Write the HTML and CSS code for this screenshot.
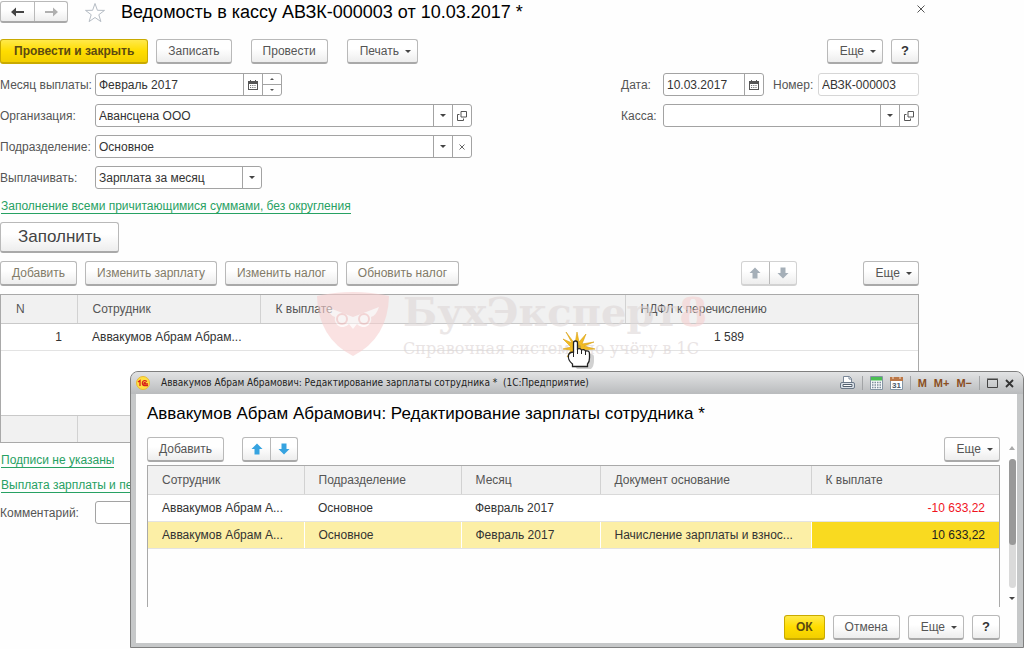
FILE: index.html
```html
<!DOCTYPE html>
<html lang="ru">
<head>
<meta charset="utf-8">
<title>Ведомость в кассу АВЗК-000003</title>
<link rel="stylesheet" href="styles.css">
</head>
<body>
<svg class="defs" aria-hidden="true">
  <symbol id="calendar" viewBox="0 0 10 10"><path d="M0 1h2V0h1v1h4V0h1v1h2v9H0zM1 4v5h8V4z" fill="#555" fill-rule="evenodd"/><path d="M2 5.500h6M2 7.500h6" stroke="#777" stroke-dasharray="1.200 1"/></symbol>
  <symbol id="open" viewBox="0 0 10 10"><path d="M4 .5h5.500v5.500H4zM2.500 3.500h-2v6h6V7.500" fill="none" stroke="#555"/></symbol>
  <symbol id="up" viewBox="0 0 12 12"><path d="M6 .5 11.500 6H8.500v5.500h-5V6H.5z"/></symbol>
  <symbol id="down" viewBox="0 0 12 12"><path d="M6 11.500 11.500 6H8.500V.5h-5V6H.5z"/></symbol>
</svg>

<main class="document">
  <header class="doc-head">
    <div class="pair nav">
      <button aria-label="Назад"><svg width="13" height="10" viewBox="0 0 13 10"><path d="M0 5 5 .5V4h8v2H5v3.500z" fill="#444"/></svg></button>
      <button aria-label="Вперед"><svg width="13" height="10" viewBox="0 0 13 10"><path d="M13 5 8 .5V4H0v2h8v3.500z" fill="#b0b0b0"/></svg></button>
    </div>
    <button class="plain star" aria-label="Избранное"><svg width="22" height="21" viewBox="0 0 22 21"><path d="m11 1.500 2.400 6.800 7.100.1-5.700 4.300 2.100 6.900-5.900-4.100-5.900 4.100 2.100-6.900L1.500 8.400l7.100-.1z" fill="#fff" stroke="#b5bcc4"/></svg></button>
    <h1>Ведомость в кассу АВЗК-000003 от 10.03.2017 *</h1>
    <button class="plain close" aria-label="Закрыть"><svg width="8" height="8" viewBox="0 0 8 8"><path d="m.5.5 7 7m0-7-7 7" stroke="#555"/></svg></button>
  </header>

  <div class="bar commands">
    <button class="btn primary">Провести и закрыть</button>
    <button class="btn">Записать</button>
    <button class="btn apart">Провести</button>
    <button class="btn apart menu">Печать</button>
    <span class="grow"></span>
    <button class="btn menu">Еще</button>
    <button class="btn help">?</button>
  </div>

  <div class="form">
    <div class="form-col">
      <div class="row"><label for="month">Месяц выплаты:</label>
        <div class="field month"><input id="month" value="Февраль 2017"><button aria-label="Календарь"><svg width="10" height="10"><use href="#calendar"/></svg></button><span class="spin"><button aria-label="Больше"><i class="tri-up"></i></button><button aria-label="Меньше"><i class="tri"></i></button></span></div></div>
      <div class="row"><label for="org">Организация:</label>
        <div class="field wide"><select id="org"><option>Авансцена ООО</option></select><span class="cell"><i class="caret"></i></span><button aria-label="Открыть"><svg width="10" height="10"><use href="#open"/></svg></button></div></div>
      <div class="row"><label for="dept">Подразделение:</label>
        <div class="field wide"><select id="dept"><option>Основное</option></select><span class="cell"><i class="caret"></i></span><button aria-label="Очистить"><svg width="6" height="6" viewBox="0 0 6 6"><path d="m.5.5 5 5m0-5-5 5" stroke="#666"/></svg></button></div></div>
      <div class="row"><label for="pay">Выплачивать:</label>
        <div class="field pay"><select id="pay"><option>Зарплата за месяц</option></select><span class="cell"><i class="caret"></i></span></div></div>
    </div>
    <div class="form-col side">
      <div class="row"><label for="date">Дата:</label>
        <div class="field date"><input id="date" value="10.03.2017"><button aria-label="Календарь"><svg width="10" height="10"><use href="#calendar"/></svg></button></div>
        <label class="num-label" for="num">Номер:</label><div class="field number"><input id="num" value="АВЗК-000003"></div></div>
      <div class="row"><label for="cash">Касса:</label>
        <div class="field number-wide"><select id="cash"><option></option></select><span class="cell"><i class="caret"></i></span><button aria-label="Открыть"><svg width="10" height="10"><use href="#open"/></svg></button></div></div>
    </div>
  </div>

  <a class="link" href="#">Заполнение всеми причитающимися суммами, без округления</a>
  <button class="btn fill">Заполнить</button>

  <div class="bar tools">
    <button class="btn muted">Добавить</button>
    <button class="btn muted">Изменить зарплату</button>
    <button class="btn muted">Изменить налог</button>
    <button class="btn muted">Обновить налог</button>
    <span class="grow"></span>
    <div class="pair off"><button aria-label="Вверх"><svg width="12" height="12"><use href="#up"/></svg></button><button aria-label="Вниз"><svg width="12" height="12"><use href="#down"/></svg></button></div>
    <button class="btn menu">Еще</button>
  </div>

  <div class="grid-box">
    <table class="grid staff">
      <colgroup><col class="c-n"><col class="c-name"><col class="c-pay"><col></colgroup>
      <thead><tr><th>N</th><th>Сотрудник</th><th>К выплате</th><th>НДФЛ к перечислению</th></tr></thead>
      <tbody><tr><td class="right">1</td><td>Аввакумов Абрам Абрам...</td><td></td><td class="tax">1 589</td></tr>
      <tr class="blank"><td colspan="4"></td></tr></tbody>
      <tfoot><tr><td></td><td></td><td></td><td></td></tr></tfoot>
    </table>
    <div class="watermark" aria-hidden="true">
      <svg width="72" height="64" viewBox="0 0 72 64"><path d="M0 4Q36-4 72 4 71 46 36 64 1 46 0 4z" fill="#f7cfcf"/><path d="m10 15 26 10 26-10q-3 9-8 10a8 8 0 0 1-14 7l-4 5-4-5a8 8 0 0 1-14-7q-5-1-8-10z" fill="#fff" opacity=".8"/><g fill="none" stroke="#f3c2c2" stroke-width="2"><circle cx="25" cy="27" r="5"/><circle cx="47" cy="27" r="5"/></g></svg>
      <div><div class="brand">БухЭксперт<b>8</b></div><div class="slogan">Справочная система по учёту в 1С</div></div>
    </div>
    <svg class="pointer" width="40" height="44" viewBox="0 0 40 44" aria-hidden="true">
      <path d="m13 13 2-12 2 10 7-8-4 10 12-2-10 4 11 3-13 1-1 3H10l-5 4 4-7-8-1 8-2L1 8l9 4L4 1z" fill="#f2bb22" stroke="#d9a010" stroke-width=".6"/>
      <path d="M11 35q-5-5-4-11l4-2V12q2-3 4 0v6l10 2q3 0 3 3v4q0 5-3 8z" transform="translate(4 3)" fill="#666" opacity=".3"/>
      <path d="M10.500 35.500V33q-5-4-4-9 1-3 5-3V12q0-2 2-2t2 2v6q3-1 4 1 3-1 4 1 4-1 4 3v4q0 4-2 6v2.500z" fill="#fff" stroke="#222" stroke-width="1.300"/><path d="M11.500 21v5M15.500 18v5M19.500 19v4M23.500 20v4" stroke="#222" fill="none"/>
    </svg>
  </div>

  <div class="links"><a class="link" href="#">Подписи не указаны</a>
  <a class="link" href="#">Выплата зарплаты и перечисление НДФЛ</a></div>
  <div class="row"><label for="note">Комментарий:</label><div class="field wide"><input id="note"></div></div>
</main>

<section class="dialog" role="dialog" aria-labelledby="dlg-title">
  <header class="titlebar">
    <svg width="14" height="14" viewBox="0 0 14 14"><circle cx="7" cy="7" r="6.500" fill="#ffdf42" stroke="#e9b934"/><path d="m2 6 2-1.500V10M11 5.500Q8 3.500 6.500 6q-.6 3.500 2 3.500H12M10 7q-2-1-2 .8h4" fill="none" stroke="#d9201a" stroke-width="1.300"/></svg>
    <span class="caption">Аввакумов Абрам Абрамович: Редактирование зарплаты сотрудника *&nbsp; (1С:Предприятие)</span>
    <div class="sys">
      <button aria-label="Печать"><svg width="15" height="14" viewBox="0 0 15 14"><path d="M3.500 7V.5h6l2 2V7" fill="#fff" stroke="#7a8797"/><path d="M9 1v2h2" fill="none" stroke="#7a8797"/><rect x=".5" y="6.500" width="14" height="6" rx="1.500" fill="#dce2e9" stroke="#6b7888"/><path d="M3 8.500h9v2H3z" fill="#fff" stroke="#53606f"/></svg></button>
      <i class="sep"></i>
      <button aria-label="Калькулятор"><svg width="13" height="14" viewBox="0 0 13 14"><path d="M.5.5h12v13H.5z" fill="#f5f8fa" stroke="#8494a2"/><path d="M1 1h11v3.500H1z" fill="#4abf52"/><path d="M2 6.500h9M2 9h9M2 11.500h9" stroke="#7d8d9b" stroke-width="1.500" stroke-dasharray="1.500 1"/></svg></button>
      <button aria-label="Календарь"><svg class="cal31" width="13" height="14" viewBox="0 0 13 14"><path d="M.5 1.500h12v12H.5z" fill="#fff" stroke="#8494a2"/><path d="M0 1h13v4H0z" fill="#bb7747"/><path d="M3 0v3M10 0v3" stroke="#f7e1ce"/><text x="2" y="12">31</text></svg></button>
      <i class="sep"></i>
      <button class="mem">M</button><button class="mem">M+</button><button class="mem">M−</button>
      <i class="sep"></i>
      <button aria-label="Развернуть"><svg width="11" height="10" viewBox="0 0 11 10"><path d="M.5 1.500h10v8H.5zM0 1h11" fill="none" stroke="#444"/></svg></button>
      <button aria-label="Закрыть"><svg width="9" height="9" viewBox="0 0 9 9"><path d="m1 1 7 7m0-7-7 7" stroke="#333" stroke-width="1.800"/></svg></button>
    </div>
  </header>
  <div class="dlg-body">
    <h2 id="dlg-title">Аввакумов Абрам Абрамович: Редактирование зарплаты сотрудника *</h2>
    <div class="dlg-main">
      <div class="dlg-content">
        <div class="bar">
          <button class="btn">Добавить</button>
          <div class="pair blue"><button aria-label="Вверх"><svg width="12" height="12"><use href="#up"/></svg></button><button aria-label="Вниз"><svg width="12" height="12"><use href="#down"/></svg></button></div>
          <span class="grow"></span>
          <button class="btn menu">Еще</button>
        </div>
        <div class="lines">
          <table class="grid">
            <colgroup><col class="d-name"><col class="d-dept"><col class="d-month"><col class="d-base"><col></colgroup>
            <thead><tr><th>Сотрудник</th><th>Подразделение</th><th>Месяц</th><th>Документ основание</th><th>К выплате</th></tr></thead>
            <tbody>
              <tr><td>Аввакумов Абрам А...</td><td>Основное</td><td>Февраль 2017</td><td></td><td class="right neg">-10 633,22</td></tr>
              <tr class="sel"><td>Аввакумов Абрам А...</td><td>Основное</td><td>Февраль 2017</td><td>Начисление зарплаты и взнос...</td><td class="right cur">10 633,22</td></tr>
            </tbody>
          </table>
        </div>
      </div>
      <div class="scroll" aria-hidden="true"><i class="tri-up"></i><div class="track"><div class="thumb"></div></div><i class="caret"></i></div>
    </div>
    <div class="bar actions">
      <button class="btn primary">ОК</button><button class="btn">Отмена</button><button class="btn menu">Еще</button><button class="btn help">?</button>
    </div>
  </div>
</section>
</body>
</html>
```

FILE: styles.css
```css
* { box-sizing: border-box; }
body { margin: 0; min-height: 100vh; background: #fefefe; color: #333; font: 12px/16px "Liberation Sans", Arial, sans-serif; position: relative; }
button, input, select { font: inherit; color: inherit; margin: 0; }
svg { display: block; flex: none; }
.defs { position: absolute; width: 0; height: 0; }
.grow { flex: 1; }

.document { padding: 1px 105px 0 0; }
.doc-head { display: flex; align-items: center; height: 22px; }
.star { margin: 0 15px 0 16px; }
h1 { flex: 1; margin: 0; font-size: 18px; line-height: 22px; font-weight: 400; color: #000; white-space: nowrap; }
.plain { border: 0; background: none; padding: 0; }
.close { margin: -6px -6px 0 0; }

.btn { height: 25px; padding: 0 11px; border: 1px solid #b9b9b9; border-bottom: 2px solid #a9a9a9; border-radius: 3px; background: linear-gradient(#fff 40%, #ededed); color: #555; white-space: nowrap; }
.primary { padding: 0 13px; background: linear-gradient(#ffe94a, #ffdd00 50%, #f2cf00); border-color: #c9aa00; color: #5c4a12; font-weight: 700; }
.muted { color: #827b68; }
.menu { padding: 0 12px; }
.menu::after { content: ""; display: inline-block; margin: 0 -6px 2px 6px; border: 3px solid transparent; border-top-color: #444; border-bottom: 0; }
.help { padding: 0 9px; font-weight: 700; font-size: 13px; color: #333; }
.bar { display: flex; align-items: center; gap: 8px; }
.commands { margin-top: 16px; }
.apart { margin-left: 11px; }

.pair { display: flex; border: 1px solid #b9b9b9; border-bottom: 2px solid #a9a9a9; border-radius: 3px; background: linear-gradient(#fff 40%, #ededed); }
.pair button { display: flex; align-items: center; justify-content: center; width: 27px; height: 22px; border: 0; background: none; padding: 0; }
.pair button + button { border-left: 1px solid #b9b9b9; }
.nav button { width: 33px; height: 19px; }
.off { margin-right: 58px; border-color: #d2d2d2; fill: #a5afb8; }
.blue { margin-left: 10px; fill: #36a3e0; }

.form { display: flex; justify-content: space-between; margin-top: 9px; }
.form-col { display: flex; flex-direction: column; gap: 8px; }
.row { display: flex; align-items: center; }
.row label { width: 95px; color: #555; white-space: nowrap; }
.side .row label { width: 42px; }
.side .row .num-label { width: 45px; margin-left: 9px; }
.field { display: flex; height: 23px; border: 1px solid #a3a3a3; border-radius: 3px; background: #fff; }
.field input, .field select { flex: 1; min-width: 0; width: 0; border: 0; padding: 0 3px; background: none; appearance: none; outline: 0; }
.field > button, .cell, .spin { display: flex; align-items: center; justify-content: center; width: 19px; border: 0; border-left: 1px solid #a3a3a3; background: none; padding: 0; }
.spin { flex-direction: column; }
.spin button { flex: 1; display: flex; align-items: center; justify-content: center; width: 100%; border: 0; background: none; padding: 0; }
.spin button + button { border-top: 1px solid #a3a3a3; }
.month { width: 187px; }
.wide { width: 377px; }
.pay { width: 167px; }
.date { width: 101px; }
.number { width: 101px; border-color: #d6d6d6; }
.number-wide { width: 256px; }
.caret { border: 3px solid transparent; border-top-color: #444; border-bottom: 0; }
.tri { border: 2px solid transparent; border-top-color: #555; border-bottom: 0; }
.tri-up { border: 2px solid transparent; border-bottom-color: #555; border-top: 0; }

.link { display: table; margin-left: 1px; line-height: 13px; color: #27a163; text-decoration: none; border-bottom: 1px solid #27a163; white-space: nowrap; }
.form + .link { margin-top: 11px; }
.fill { display: block; height: 31px; margin-top: 8px; padding: 0 17px; font-size: 17px; color: #444; }
.tools { margin-top: 8px; }

.grid-box { position: relative; margin-top: 8px; border: 1px solid #a9a9a9; }
.grid { width: 100%; border-collapse: collapse; table-layout: fixed; background: #fff; }
.grid th, .grid td { padding: 0 15px; height: 27px; text-align: left; font-weight: 400; white-space: nowrap; border-bottom: 1px solid #e3e3e3; }
.grid th { height: 28px; background: #f1f1f1; color: #555; border-bottom-color: #c9c9c9; }
.grid th + th, .grid tfoot td + td { border-left: 1px solid #d2d2d2; }
.grid .right { text-align: right; }
.staff .blank td { height: 65px; border-bottom-color: #c9c9c9; }
.staff tfoot td { height: 27px; background: #f1f1f1; border-bottom: 0; }
.grid .tax { padding-left: 89px; }
.c-n { width: 76px; }
.c-name { width: 183px; }
.c-pay { width: 365px; }
.watermark { position: absolute; left: 316px; top: -3px; display: flex; gap: 14px; opacity: .6; pointer-events: none; white-space: nowrap; font-family: "DejaVu Serif", serif; }
.brand { font-size: 40px; line-height: 40px; font-weight: 700; color: #ded8d8; }
.brand b { color: #f5d0d0; }
.slogan { padding-top: 5px; font: 16px/24px "DejaVu Serif", serif; color: #dcd3d3; }
.pointer { position: absolute; left: 561px; top: 36px; }

.links { display: grid; justify-items: start; gap: 11px; margin: 11px 0 8px; }

.dialog { position: absolute; left: 130px; right: 0; top: 371px; padding: 0 6px 4px 5px; border: 1px solid #7f7f7f; border-radius: 8px 8px 0 0; background: #c6c8c9; }
.titlebar { display: flex; align-items: center; height: 22px; margin: 0 -6px 0 -5px; padding: 0 9px 0 5px; border-radius: 7px 7px 0 0; background: linear-gradient(#e2e3e4, #b9bbbd); color: #222; }
.caption { flex: 1; margin-left: 11px; font: 10px/16px "DejaVu Sans Condensed", "DejaVu Sans", sans-serif; white-space: nowrap; }
.sys { display: flex; align-items: center; gap: 7px; }
.sys button { border: 0; background: none; padding: 0; }
.sep { width: 1px; height: 14px; background: #a2a4a6; }
.sys .mem { font-size: 11px; font-weight: 700; color: #8a4e22; }
.cal31 { font: 700 8px "Liberation Sans", sans-serif; fill: #4b5866; }
.dlg-body { background: #fefefe; padding: 8px 1px 3px 11px; }
h2 { margin: 0 0 11px; font-size: 17px; line-height: 24px; font-weight: 400; color: #000; white-space: nowrap; }
.dlg-main { display: flex; gap: 8px; }
.dlg-content { flex: 1; }
.lines { margin-top: 3px; height: 142px; border: 1px solid #a9a9a9; border-bottom: 0; }
.lines .grid th, .lines .grid td { padding: 0 14px; }
.lines .grid th { border-bottom-color: #d9d9d9; }
.d-name { width: 156px; }
.d-dept { width: 157px; }
.d-month { width: 139px; }
.d-base { width: 211px; }
.grid .neg { color: #f0141e; }
.grid .sel td { background: #fcefa6; border-top: 1px solid #fff; }
.grid .sel td + td { border-left: 1px solid #fff; }
.grid .sel .cur { background: #f9da20; color: #222; }
.scroll { display: flex; flex-direction: column; align-items: center; width: 8px; padding: 9px 0 7px; }
.scroll .tri-up { border-width: 0 3px 4px; border-bottom-color: #aaa; }
.track { flex: 1; width: 7px; margin: 9px 0; border-radius: 4px; background: #dadada; }
.thumb { width: 7px; height: 86px; border-radius: 4px; background: #999; }
.actions { justify-content: flex-end; margin: 8px 16px 0 0; }
.actions .primary { padding: 0 11px; }
```
